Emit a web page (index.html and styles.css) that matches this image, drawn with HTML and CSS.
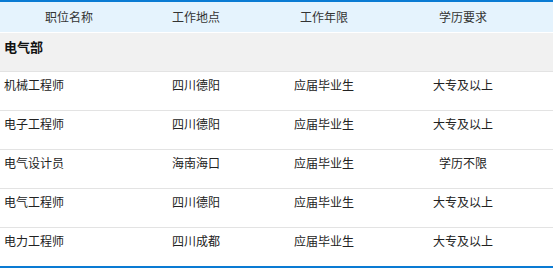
FILE: index.html
```html
<!DOCTYPE html>
<html lang="zh">
<head>
<meta charset="utf-8">
<link rel="stylesheet" href="styles.css">
</head>
<body>
<div class="jobs">
  <div class="head">
    <div class="c">职位名称</div>
    <div class="c">工作地点</div>
    <div class="c">工作年限</div>
    <div class="c">学历要求</div>
  </div>
  <div class="dept">电气部</div>
  <div class="row">
    <div class="name">机械工程师</div>
    <div class="c">四川德阳</div>
    <div class="c">应届毕业生</div>
    <div class="c">大专及以上</div>
  </div>
  <div class="row">
    <div class="name">电子工程师</div>
    <div class="c">四川德阳</div>
    <div class="c">应届毕业生</div>
    <div class="c">大专及以上</div>
  </div>
  <div class="row">
    <div class="name">电气设计员</div>
    <div class="c">海南海口</div>
    <div class="c">应届毕业生</div>
    <div class="c">学历不限</div>
  </div>
  <div class="row">
    <div class="name">电气工程师</div>
    <div class="c">四川德阳</div>
    <div class="c">应届毕业生</div>
    <div class="c">大专及以上</div>
  </div>
  <div class="row">
    <div class="name">电力工程师</div>
    <div class="c">四川成都</div>
    <div class="c">应届毕业生</div>
    <div class="c">大专及以上</div>
  </div>
</div>
</body>
</html>
```
FILE: styles.css
```css
html, body {
  margin: 0;
  padding: 0;
  background: #fff;
}
body {
  font-family: "Noto Sans CJK SC", "Microsoft YaHei", sans-serif;
  font-size: 12px;
  color: #222;
  line-height: 18px;
}
.jobs {
  border-top: 2px solid #0a7bd3;
  border-bottom: 2px solid #0a7bd3;
}
.head, .row {
  display: grid;
  grid-template-columns: 138px 116px 140px 138px 1fr;
}
.head {
  height: 30px;
  align-items: center;
  background: #e5f3fd;
  border-bottom: 1px solid #fff;
  color: #333;
}
.c {
  text-align: center;
}
.dept {
  height: 38px;
  box-sizing: border-box;
  padding: 5px 4px 0;
  background: #f1f1f1;
  font-weight: bold;
  font-size: 13px;
  color: #111;
}
.row {
  height: 39px;
  box-sizing: border-box;
  border-top: 1px solid #e3e3e3;
  padding-top: 4px;
}
.name {
  padding-left: 4px;
}
```
